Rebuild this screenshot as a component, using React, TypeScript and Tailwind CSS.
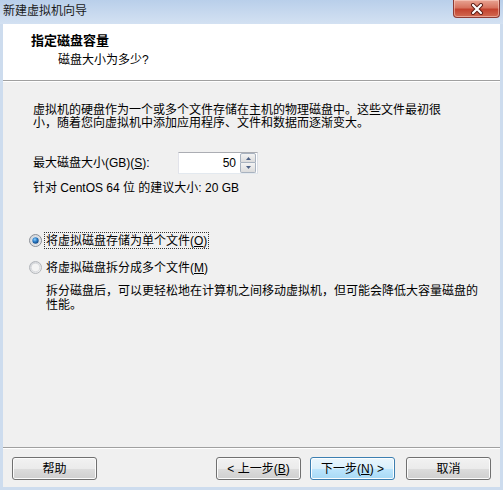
import React from "react";

function Btn({ children, def = false, className = "" }: { children: React.ReactNode; def?: boolean; className?: string }) {
  return (
    <div
      className={
        "w-[85px] h-[23px] rounded-[3px] border flex items-center justify-center text-[12px] text-black " +
        (def
          ? "border-[#3c7fb1] bg-[linear-gradient(#eaf6fd_0%,#d9f0fc_50%,#bee6fd_50%,#a7d9f5_100%)] shadow-[inset_0_0_0_1px_#fcfeff]"
          : "border-[#707070] bg-[linear-gradient(#f2f2f2_0%,#ebebeb_50%,#dddddd_50%,#cfcfcf_100%)] shadow-[inset_0_0_0_1px_#fcfcfc]") +
        " " +
        className
      }
    >
      {children}
    </div>
  );
}

function Radio({ checked }: { checked: boolean }) {
  return (
    <svg width="13" height="13" viewBox="0 0 13 13" className="shrink-0">
      <defs>
        <linearGradient id={checked ? "rgc" : "rgu"} x1="0" y1="0" x2="1" y2="1">
          <stop offset="0" stopColor="#cbcfd5" />
          <stop offset="1" stopColor="#f6f6f6" />
        </linearGradient>
        <radialGradient id="dot" cx="0.4" cy="0.35" r="0.7">
          <stop offset="0" stopColor="#8fd0ff" />
          <stop offset="0.5" stopColor="#2a7bc4" />
          <stop offset="1" stopColor="#0f3f7a" />
        </radialGradient>
      </defs>
      <circle cx="6.5" cy="6.5" r="6" fill={`url(#${checked ? "rgc" : "rgu"})`} stroke={checked ? "#8a8f97" : "#b3b6ba"} />
      <circle cx="6.5" cy="6.5" r="4.3" fill="#f4f4f4" stroke="#d4d6d9" strokeWidth="0.8" />
      {checked && <circle cx="6.5" cy="6.5" r="3.2" fill="url(#dot)" />}
    </svg>
  );
}

export default function App() {
  return (
    <div className="w-[503px] h-[490px] bg-[#cddcee] flex flex-col font-['Liberation_Sans','Noto_Sans_CJK_SC',sans-serif] text-[12px] text-black overflow-hidden">
      {/* title bar */}
      <div className="h-[24px] flex items-start justify-between bg-[linear-gradient(#b9cfea,#c9daef_60%,#d3e1f2)]">
        <div className="pl-[3px] pt-[3px] text-[12px] leading-[16px] text-[#1a1a1a]">新建虚拟机向导</div>
        <div className="mr-[3px] w-[47px] h-[18px] rounded-b-[4px] border border-t-0 border-[#8d3b34] bg-[linear-gradient(#e8a493_0%,#d7735f_45%,#c3432f_55%,#d26a52_100%)] flex items-center justify-center shadow-[inset_0_0_0_1px_rgba(255,220,210,0.5)]">
          <svg width="14" height="12" viewBox="0 0 14 12">
            <path d="M3 2 L11 10 M11 2 L3 10" stroke="#5a1a12" strokeWidth="4" strokeLinecap="round" />
            <path d="M3 2 L11 10 M11 2 L3 10" stroke="#ffffff" strokeWidth="2.2" strokeLinecap="round" />
          </svg>
        </div>
      </div>

      {/* inner area */}
      <div className="flex-1 mx-[3px] mb-[3px] flex flex-col bg-[#f0f0f0]">
        {/* header */}
        <div className="h-[57px] bg-white border-b border-[#a0a0a0] pl-[28px] pt-[9px]">
          <div className="text-[13px] leading-[16px] font-bold">指定磁盘容量</div>
          <div className="pl-[27px] mt-[3px] text-[12px] leading-[16px]">磁盘大小为多少?</div>
        </div>

        {/* body */}
        <div className="flex-1 pl-[30px] pt-[22px] border-t border-white">
          <div className="leading-[13px]">
            <div>虚拟机的硬盘作为一个或多个文件存储在主机的物理磁盘中。这些文件最初很</div>
            <div>小，随着您向虚拟机中添加应用程序、文件和数据而逐渐变大。</div>
          </div>

          <div className="mt-[22px] h-[22px] flex items-center">
            <div className="w-[145px] leading-[14px]">
              最大磁盘大小(GB)(<span className="underline">S</span>):
            </div>
            <div className="w-[80px] h-[22px] border border-[#abadb3] border-b-[#e3e9ef] border-r-[#dbdfe6] border-l-[#e2e3ea] bg-white flex items-center">
              <div className="flex-1 text-right pr-[4px] leading-[14px]">50</div>
              <div className="w-[16px] h-[20px] flex flex-col mr-[1px]">
                <div className="h-[10px] border border-[#a8b2bf] rounded-t-[2px] bg-[linear-gradient(#f3f3f3,#dcdcdc)] flex items-center justify-center">
                  <svg width="5" height="3" viewBox="0 0 5 3"><path d="M0 3 L2.5 0 L5 3 Z" fill="#4d6185" /></svg>
                </div>
                <div className="h-[10px] border border-t-0 border-[#a8b2bf] rounded-b-[2px] bg-[linear-gradient(#f3f3f3,#dcdcdc)] flex items-center justify-center">
                  <svg width="5" height="3" viewBox="0 0 5 3"><path d="M0 0 L2.5 3 L5 0 Z" fill="#4d6185" /></svg>
                </div>
              </div>
            </div>
          </div>

          <div className="mt-[7px] leading-[14px]">针对 CentOS 64 位 的建议大小: 20 GB</div>

          <div className="mt-[37px] -ml-[4px] h-[17px] flex items-center">
            <Radio checked={true} />
            <div className="ml-[2px] px-[1px] h-[17px] flex items-center border border-dotted border-[#333] leading-[14px]">
              将虚拟磁盘存储为单个文件(<span className="underline">O</span>)
            </div>
          </div>

          <div className="mt-[10px] -ml-[4px] h-[17px] flex items-center">
            <Radio checked={false} />
            <div className="ml-[3px] px-[1px] leading-[14px]">
              将虚拟磁盘拆分成多个文件(<span className="underline">M</span>)
            </div>
          </div>

          <div className="mt-[8px] pl-[13px] leading-[14px]">
            <div>拆分磁盘后，可以更轻松地在计算机之间移动虚拟机，但可能会降低大容量磁盘的</div>
            <div>性能。</div>
          </div>
        </div>

        {/* footer */}
        <div className="border-t border-[#a0a0a0]">
          <div className="border-t border-white h-[39px] flex items-start justify-between px-[9px] pt-[8px]">
            <Btn>帮助</Btn>
            <div className="flex">
              <Btn>&lt; 上一步(<span className="underline">B</span>)</Btn>
              <Btn def className="ml-[9px]">下一步(<span className="underline">N</span>) &gt;</Btn>
              <Btn className="ml-[11px]">取消</Btn>
            </div>
          </div>
        </div>
      </div>
    </div>
  );
}
